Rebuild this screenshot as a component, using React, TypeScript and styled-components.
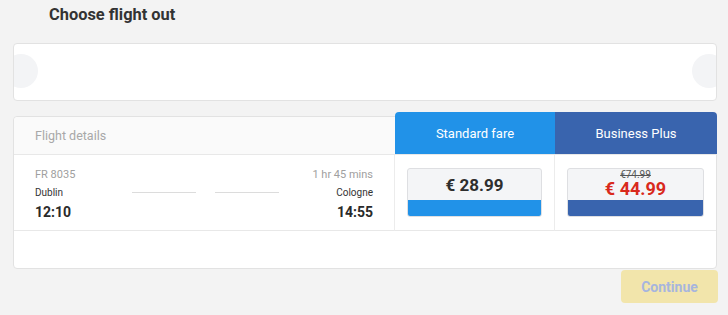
import React from "react";
import styled, { createGlobalStyle } from "styled-components";

const GlobalStyle = createGlobalStyle`
  html, body {
    margin: 0;
    padding: 0;
    background: #f3f3f3;
    font-family: Roboto, "Noto Sans", Arial, sans-serif;
  }
`;

const Page = styled.div`
  width: 728px;
  height: 315px;
  padding: 6px 11px 0 13px;
  box-sizing: border-box;
  display: flex;
  flex-direction: column;
`;

const Title = styled.h2`
  margin: 0 0 0 36px;
  font-size: 16.4px;
  line-height: 18px;
  font-weight: 700;
  color: #333;
`;

const Carousel = styled.div`
  position: relative;
  margin-top: 19px;
  height: 56px;
  background: #fff;
  border: 1px solid #e2e2e2;
  border-radius: 4px;
  overflow: hidden;
`;

const Arrow = styled.span<{ side: "left" | "right" }>`
  position: absolute;
  top: 10px;
  ${p => (p.side === "left" ? "left: -10px;" : "right: -10px;")}
  width: 34px;
  height: 34px;
  border-radius: 50%;
  background: #f3f4f6;
`;

const Table = styled.div`
  margin-top: 15px;
  background: #fff;
  border: 1px solid #e2e2e2;
  border-radius: 4px;
  display: grid;
  grid-template-columns: 381px 160px 161px;
  grid-template-rows: 38px 76px 37px;
`;

const HeadCell = styled.div`
  background: #fafafa;
  border-bottom: 1px solid #e8e8e8;
  border-radius: 4px 0 0 0;
  padding-left: 21px;
  display: flex;
  align-items: center;
  font-size: 12.5px;
  color: #a8a8a8;
`;

const FareHead = styled.div<{ tone: string; last?: boolean }>`
  margin-top: -5px;
  ${p => (p.last ? "margin-right: -1px; border-radius: 0 4px 0 0;" : "border-radius: 4px 0 0 0;")}
  background: ${p => p.tone};
  border-bottom: 1px solid #e8e8e8;
  color: #fff;
  font-size: 13px;
  display: flex;
  align-items: center;
  justify-content: center;
`;

const FlightCell = styled.div`
  border-bottom: 1px solid #e8e8e8;
  border-right: 1px solid #ececec;
  padding: 11px 21px 0 21px;
  display: grid;
  grid-template-columns: auto 1fr auto;
  grid-template-rows: 16px 20px 20px;
`;

const Muted = styled.div<{ right?: boolean }>`
  font-size: 11px;
  color: #a0a0a0;
  text-align: ${p => (p.right ? "right" : "left")};
  align-self: center;
`;

const City = styled.div<{ right?: boolean }>`
  font-size: 10px;
  color: #333;
  text-align: ${p => (p.right ? "right" : "left")};
  align-self: center;
`;

const Time = styled.div<{ right?: boolean }>`
  font-size: 14px;
  font-weight: 700;
  color: #2a2a2a;
  text-align: ${p => (p.right ? "right" : "left")};
  align-self: center;
`;

const Route = styled.div`
  grid-column: 2;
  display: flex;
  justify-content: center;
  align-items: center;
  gap: 19px;
  padding-left: 24px;
`;

const Dash = styled.span`
  width: 64px;
  height: 1px;
  background: #dcdcdc;
`;

const FareCell = styled.div<{ last?: boolean }>`
  border-bottom: 1px solid #e8e8e8;
  ${p => (p.last ? "" : "border-right: 1px solid #ececec;")}
  padding: 13px 12px 0 12px;
`;

const PriceBox = styled.div<{ tone: string }>`
  height: 47px;
  background: #f4f5f7;
  border: 1px solid #dedfe2;
  border-radius: 3px;
  overflow: hidden;
  display: flex;
  flex-direction: column;
  &::after {
    content: "";
    height: 16px;
    background: ${p => p.tone};
  }
`;

const PriceBody = styled.div<{ stacked?: boolean }>`
  flex: 1;
  display: flex;
  flex-direction: column;
  align-items: center;
  justify-content: center;
  padding-bottom: ${p => (p.stacked ? "3px" : "0")};
`;

const Price = styled.div<{ sale?: boolean }>`
  font-size: ${p => (p.sale ? "18px" : "17px")};
  line-height: 17px;
  font-weight: 700;
  color: ${p => (p.sale ? "#d9291c" : "#2e2e2e")};
  margin-top: ${p => (p.sale ? "0" : "1px")};
`;

const OldPrice = styled.div`
  font-size: 10px;
  line-height: 10px;
  color: #555;
  text-decoration: line-through;
`;

const Empty = styled.div`
  grid-column: 1 / 4;
`;

const Footer = styled.div`
  display: flex;
  justify-content: flex-end;
  padding-top: 1px;
`;

const Continue = styled.button`
  width: 97px;
  height: 33px;
  margin-right: -1px;
  border: none;
  border-radius: 4px;
  background: #f2e5ab;
  color: #a7b5de;
  font-family: Roboto, Arial, sans-serif;
  font-size: 14px;
  font-weight: 700;
  cursor: pointer;
`;

export default function App() {
  return (
    <>
      <GlobalStyle />
      <Page>
        <Title>Choose flight out</Title>
        <Carousel>
          <Arrow side="left" />
          <Arrow side="right" />
        </Carousel>
        <Table>
          <HeadCell>Flight details</HeadCell>
          <FareHead tone="#2192e8">Standard fare</FareHead>
          <FareHead tone="#3964ae" last>
            Business Plus
          </FareHead>

          <FlightCell>
            <Muted>FR 8035</Muted>
            <span />
            <Muted right>1 hr 45 mins</Muted>
            <City>Dublin</City>
            <Route>
              <Dash />
              <Dash />
            </Route>
            <City right>Cologne</City>
            <Time>12:10</Time>
            <span />
            <Time right>14:55</Time>
          </FlightCell>
          <FareCell>
            <PriceBox tone="#2192e8">
              <PriceBody>
                <Price>€ 28.99</Price>
              </PriceBody>
            </PriceBox>
          </FareCell>
          <FareCell last>
            <PriceBox tone="#3964ae">
              <PriceBody stacked>
                <OldPrice>€74.99</OldPrice>
                <Price sale>€ 44.99</Price>
              </PriceBody>
            </PriceBox>
          </FareCell>

          <Empty />
        </Table>
        <Footer>
          <Continue>Continue</Continue>
        </Footer>
      </Page>
    </>
  );
}
